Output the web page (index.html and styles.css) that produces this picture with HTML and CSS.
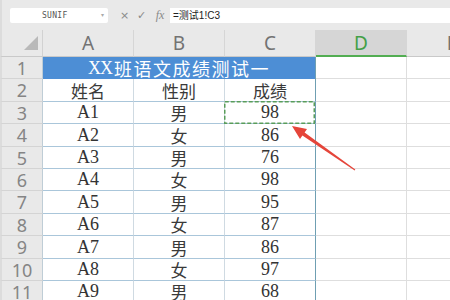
FILE: index.html
```html
<!DOCTYPE html>
<html lang="zh">
<head>
<meta charset="utf-8">
<link rel="stylesheet" href="styles.css">
</head>
<body>
<div class="fbar">
  <div class="namebox"><span class="nm">SUNIF</span><span class="dd">&#9662;</span></div>
  <div class="icons"><span class="ic">&#215;</span><span class="ic">&#10003;</span><span class="ic fx">fx</span></div>
  <div class="finput">=测试1!C3</div>
</div>
<div class="sheet">
  <div class="corner"><span class="tri"></span></div>
  <div class="hd">A</div><div class="hd">B</div><div class="hd">C</div><div class="hd sel">D</div><div class="hd">E</div>

  <div class="rn">1</div><div class="title"><span class="xx">XX</span>班语文成绩测试一</div><div class="e"></div><div class="e"></div>

  <div class="rn">2</div><div class="c zh">姓名</div><div class="c zh">性别</div><div class="c zh last">成绩</div><div class="e"></div><div class="e"></div>

  <div class="rn">3</div><div class="c">A1</div><div class="c zh">男</div><div class="c last act">98<svg class="ants" width="91" height="23"><rect x="0.75" y="0.75" width="89.5" height="21.5"/></svg></div><div class="e"></div><div class="e"></div>

  <div class="rn">4</div><div class="c">A2</div><div class="c zh">女</div><div class="c last">86</div><div class="e"></div><div class="e"></div>

  <div class="rn">5</div><div class="c">A3</div><div class="c zh">男</div><div class="c last">76</div><div class="e"></div><div class="e"></div>

  <div class="rn">6</div><div class="c">A4</div><div class="c zh">女</div><div class="c last">98</div><div class="e"></div><div class="e"></div>

  <div class="rn">7</div><div class="c">A5</div><div class="c zh">男</div><div class="c last">95</div><div class="e"></div><div class="e"></div>

  <div class="rn">8</div><div class="c">A6</div><div class="c zh">女</div><div class="c last">87</div><div class="e"></div><div class="e"></div>

  <div class="rn">9</div><div class="c">A7</div><div class="c zh">男</div><div class="c last">86</div><div class="e"></div><div class="e"></div>

  <div class="rn">10</div><div class="c">A8</div><div class="c zh">女</div><div class="c last">97</div><div class="e"></div><div class="e"></div>

  <div class="rn">11</div><div class="c">A9</div><div class="c zh">男</div><div class="c last">68</div><div class="e"></div><div class="e"></div>
</div>
<svg class="arrow" width="450" height="300" viewBox="0 0 450 300">
  <polygon points="292,126 307,129 304.6,132.4 355.3,169.5 354.7,170.5 302.4,135.6 300,139"/>
</svg>
</body>
</html>
```
FILE: styles.css
```css
html, body {
  margin: 0;
  padding: 0;
}
body {
  width: 450px;
  height: 300px;
  overflow: hidden;
  background: #ffffff;
  position: relative;
  font-family: "Liberation Serif", "Noto Sans CJK SC", serif;
}

.fbar {
  height: 30px;
  background: #e9e9e9;
  display: flex;
  align-items: center;
  padding-left: 8px;
  box-sizing: border-box;
  border-left: 2px solid #dcdcdc;
}
.namebox {
  width: 98px;
  height: 15px;
  background: #fff;
  border-radius: 2px;
  display: flex;
  align-items: center;
  position: relative;
  box-sizing: border-box;
}
.nm {
  font-family: "DejaVu Sans Mono", monospace;
  font-size: 8px;
  color: #555;
  margin-left: 32px;
  letter-spacing: 0.3px;
}
.dd {
  position: absolute;
  right: 4px;
  top: 3px;
  font-size: 6px;
  color: #aaa;
  font-family: "DejaVu Sans", sans-serif;
}
.icons {
  width: 62px;
  display: flex;
  align-items: center;
  padding-left: 12px;
  gap: 8px;
  box-sizing: border-box;
}
.ic {
  color: #8a8a8a;
  font-family: "DejaVu Sans", sans-serif;
  font-size: 11px;
  width: 9px;
  text-align: center;
}
.fx {
  font-family: "Liberation Serif", serif;
  font-style: italic;
  font-size: 12px;
  width: 12px;
}
.finput {
  flex: 1;
  height: 15px;
  background: #fff;
  font-family: "Liberation Sans", "Noto Sans CJK SC", sans-serif;
  font-size: 10px;
  line-height: 15px;
  color: #222;
  padding-left: 3px;
}

.sheet {
  display: grid;
  grid-template-columns: 43px repeat(5, 91px);
  grid-template-rows: 27px 22px 23px 22px 23px 22px 22px 23px 22px 23px 22px 22px;
  width: 498px;
}
.sheet > div {
  box-sizing: border-box;
  display: flex;
  align-items: center;
  justify-content: center;
}
.corner {
  background: #e9e9e9;
  border-right: 1px solid #d2d2d2;
  border-bottom: 1px solid #c9c9c9;
  border-left: 2px solid #dcdcdc;
  position: relative;
}
.tri {
  position: absolute;
  left: 22px;
  top: 6px;
  width: 0;
  height: 0;
  border-left: 14px solid transparent;
  border-bottom: 14px solid #b9b9b9;
}
.hd {
  background: #e9e9e9;
  border-right: 1px solid #d6d6d6;
  border-bottom: 1px solid #c9c9c9;
  color: #737373;
  font-family: "Noto Sans", "Liberation Sans", sans-serif;
  font-size: 19px;
}
.hd.sel {
  background: #d6d6d6;
  color: #43a047;
  border-bottom: 2px solid #52ad52;
}
.rn {
  background: #e9e9e9;
  border-right: 1px solid #bfcdd6;
  border-bottom: 1px solid #d4d4d4;
  border-left: 2px solid #dcdcdc;
  color: #858585;
  font-family: "Noto Sans", "Liberation Sans", sans-serif;
  font-size: 18px;
}
.title {
  grid-column: span 3;
  background: #4d8ed5;
  color: #fff;
  font-size: 18px;
  letter-spacing: 1.5px;
  border-right: 1px solid #6f9fb2;
}
.xx {
  letter-spacing: -1px;
  margin-right: 2px;
}
.c {
  border-bottom: 1px solid #aac6da;
  border-right: 1px solid #cfdae2;
  color: #333;
  font-size: 18px;
}
.c.zh {
  font-size: 17px;
  color: #3a3a3a;
}
.c.last {
  border-right: 1px solid #6f9fb2;
}
.c.act {
  position: relative;
}
.ants {
  position: absolute;
  left: -1px;
  top: -1px;
  overflow: visible;
}
.ants rect {
  fill: none;
  stroke: #5a9d5a;
  stroke-width: 1.5;
  stroke-dasharray: 4 2;
}
.e {
  border-bottom: 1px solid #dedede;
  border-right: 1px solid #dedede;
}
.arrow {
  position: absolute;
  left: 0;
  top: 0;
  pointer-events: none;
}
.arrow polygon {
  fill: #e5453a;
}
```
